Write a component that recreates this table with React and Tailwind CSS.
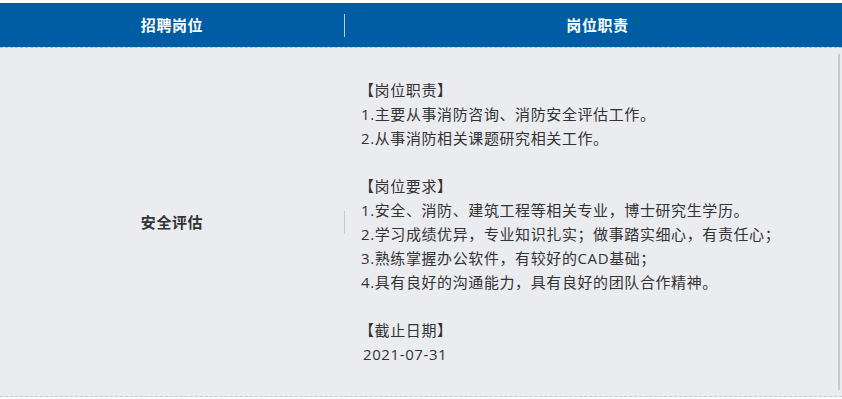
const duties = [
  '1.主要从事消防咨询、消防安全评估工作。',
  '2.从事消防相关课题研究相关工作。',
];

const requirements = [
  '1.安全、消防、建筑工程等相关专业，博士研究生学历。',
  '2.学习成绩优异，专业知识扎实；做事踏实细心，有责任心；',
  '3.熟练掌握办公软件，有较好的CAD基础；',
  '4.具有良好的沟通能力，具有良好的团队合作精神。',
];

const font = { fontFamily: "'Open Sans', 'Noto Sans CJK SC', sans-serif" };

export default function App() {
  return (
    <div className="w-[842px] h-[399px] bg-white pt-[3px] tracking-[0.6px]" style={font}>
      {/* Table head */}
      <div className="flex items-center h-[44px] bg-[#005da3] text-white text-[15px] font-bold">
        <div className="w-[344px] text-center">招聘岗位</div>
        <div className="w-px h-[23px] bg-[#c9c9c9]" />
        <div className="flex-1 text-center pl-[8px]">岗位职责</div>
      </div>

      {/* Row */}
      <div className="flex h-[350px] bg-[#ebecf0] border-t border-b border-dashed border-t-[#a9c3dd] border-b-[#c8c8c8]">
        <div className="w-[344px] flex items-center justify-center text-[15px] font-bold text-[#333]">
          安全评估
        </div>
        <div className="self-center w-px h-[23px] bg-[#c9c9c9]" />
        <div className="flex-1 flex items-center pl-[14px] text-[15px] leading-[24px] text-[#333]">
          <div>
            <p>【岗位职责】</p>
            {duties.map(t => <p key={t} className="pl-[2px]">{t}</p>)}
            <p>&nbsp;</p>
            <p>【岗位要求】</p>
            {requirements.map(t => <p key={t} className="pl-[2px]">{t}</p>)}
            <p>&nbsp;</p>
            <p>【截止日期】</p>
            <p className="pl-[4px]">2021-07-31</p>
          </div>
        </div>
        <div className="w-[2px] bg-[#c9c9c9] mt-[6px] mb-[6px] mr-[2px]" />
      </div>
    </div>
  );
}
